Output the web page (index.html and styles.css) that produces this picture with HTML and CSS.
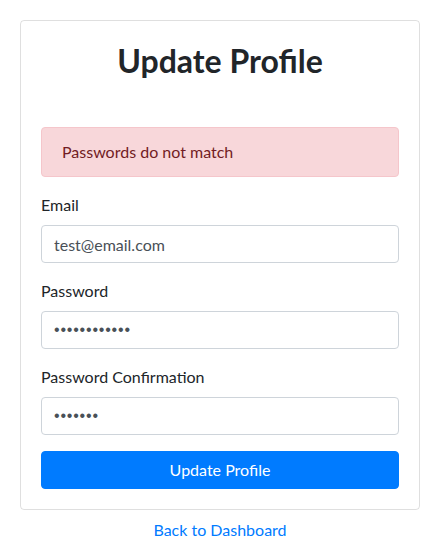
FILE: index.html
```html
<!DOCTYPE html>
<html lang="en">
<head>
<meta charset="utf-8">
<title>Update Profile</title>
<link rel="stylesheet" href="styles.css">
</head>
<body>
<div class="page">
  <div class="card">
    <h2 class="title">Update Profile</h2>
    <div class="alert">Passwords do not match</div>
    <form class="form">
      <div class="group">
        <label class="label" for="email">Email</label>
        <input class="input" id="email" type="email" value="test@email.com">
      </div>
      <div class="group">
        <label class="label" for="password">Password</label>
        <input class="input input-secret" id="password" type="password" value="passwordpass">
      </div>
      <div class="group">
        <label class="label" for="confirm">Password Confirmation</label>
        <input class="input input-secret" id="confirm" type="password" value="passwor">
      </div>
      <button class="btn" type="button">Update Profile</button>
    </form>
  </div>
  <div class="back"><a class="link" href="#">Back to Dashboard</a></div>
</div>
</body>
</html>
```
FILE: styles.css
```css
* { box-sizing: border-box; }
html, body { margin: 0; padding: 0; background: #fff; }
body {
  font-family: "Lato", "Noto Sans", sans-serif;
  font-size: 16px;
  line-height: 1.5;
  color: #212529;
}
.page { padding: 20px; width: 440px; }
.card {
  width: 400px;
  border: 1px solid rgba(0,0,0,0.125);
  border-radius: 4px;
  padding: 20px;
}
.title {
  margin: 0 0 47px;
  padding-top: 1px;
  font-size: 32px;
  line-height: 38px;
  font-weight: 700;
  text-align: center;
}
.alert {
  background: #f8d7da;
  border: 1px solid #f5c6cb;
  color: #721c24;
  border-radius: 4px;
  padding: 12px 20px;
  margin-bottom: 16px;
}
.form { display: flex; flex-direction: column; }
.group { display: flex; flex-direction: column; margin-bottom: 16px; }
.label { margin-bottom: 8px; }
.input {
  height: 38px;
  padding: 6px 12px;
  font: inherit;
  color: #495057;
  border: 1px solid #ced4da;
  border-radius: 4px;
  background: #fff;
  width: 100%;
}
.input-secret {
  font-family: "Liberation Sans", Arial, sans-serif;
  letter-spacing: 0.8px;
}
.btn {
  height: 38px;
  font: inherit;
  color: #fff;
  background: #007bff;
  border: 1px solid #007bff;
  border-radius: 4px;
  width: 100%;
}
.back { text-align: center; margin-top: 8px; }
.link { color: #007bff; text-decoration: none; }
```
